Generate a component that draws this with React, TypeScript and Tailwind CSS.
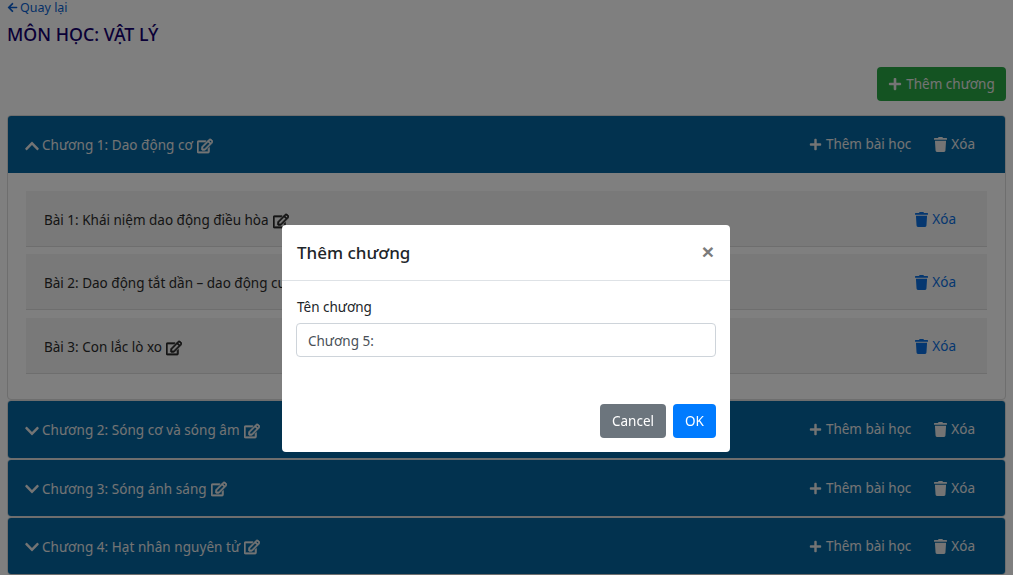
import { FaArrowLeft, FaChevronDown, FaChevronUp, FaPlus, FaRegEdit, FaTrash } from "react-icons/fa";

function ChapterHeader({ title, open, h }: { title: string; open?: boolean; h: string }) {
  return (
    <div className={`flex items-center justify-between bg-[#04659f] pl-[17px] pr-[30px] text-[#e8e8e8] ${h}`}>
      <div className="flex items-center mt-[2px]">
        {open ? <FaChevronUp className="w-[14px] h-[16px] mr-[3px]" /> : <FaChevronDown className="w-[14px] h-[16px] mr-[3px]" />}
        <span className="tracking-[0.05px]">{title}</span>
        <FaRegEdit className="w-[16px] h-[16px] ml-[4px] stroke-[24]" />
      </div>
      <div className="flex items-center">
        <FaPlus className="w-[13px] h-[13px] mr-[4px]" />
        <span>Thêm bài học</span>
        <FaTrash className="w-[13px] h-[15px] ml-[23px] mr-[4px]" />
        <span>Xóa</span>
      </div>
    </div>
  );
}

function Lesson({ title, extra }: { title: string; extra?: string }) {
  return (
    <div className={`flex items-center justify-between h-[56px] bg-[#f2f2f2] border-b border-[#dcdcdc] pl-[18px] pr-[31px] text-[#2b2b2b] ${extra ?? ""}`}>
      <div className="flex items-center mt-[4px]">
        <span>{title}</span>
        <FaRegEdit className="w-[16px] h-[16px] ml-[4px] stroke-[24]" />
      </div>
      <div className="flex items-center mt-[2px] text-[#0a6fe0]">
        <FaTrash className="w-[13px] h-[15px] mr-[4px]" />
        <span>Xóa</span>
      </div>
    </div>
  );
}

export default function App() {
  return (
    <div className="h-[575px] overflow-hidden bg-white px-[7px] text-[13.5px] leading-[21px] font-['Noto_Sans','Open_Sans',sans-serif]">
      <a className="flex items-center h-[15px] leading-[15px] text-[#0a5fd0] text-[12.5px]">
        <FaArrowLeft className="w-[11px] h-[11px] mr-[2px]" />
        Quay lại
      </a>
      <h1 className="mt-[8px] h-[22px] text-[17.8px] leading-[22px] font-medium text-[#14006e]">MÔN HỌC: VẬT LÝ</h1>
      <div className="flex justify-end mt-[22px]">
        <button className="flex items-center justify-center w-[129px] h-[34px] rounded-[4px] bg-[#28a745] text-[#e8e8e8]">
          <FaPlus className="w-[14px] h-[14px] mr-[4px]" />
          Thêm chương
        </button>
      </div>
      <div className="mt-[14px] flex flex-col">
        <div className="h-[285px] border border-[#dcdcdc] rounded-[4px] overflow-hidden">
          <ChapterHeader title="Chương 1: Dao động cơ" open h="h-[57px]" />
          <div className="flex flex-col gap-[7px] px-[18px] pt-[18px]">
            <Lesson title="Bài 1: Khái niệm dao động điều hòa" />
            <Lesson title="Bài 2: Dao động tắt dần – dao động cưỡng bức" />
            <Lesson title="Bài 3: Con lắc lò xo" extra="mt-[1px]" />
          </div>
        </div>
        <div className="border border-[#dcdcdc] rounded-[4px] overflow-hidden"><ChapterHeader title="Chương 2: Sóng cơ và sóng âm" h="h-[57px]" /></div>
        <div className="border border-[#dcdcdc] rounded-[4px] overflow-hidden"><ChapterHeader title="Chương 3: Sóng ánh sáng" h="h-[56px]" /></div>
        <div className="border border-[#dcdcdc] rounded-[4px] overflow-hidden"><ChapterHeader title="Chương 4: Hạt nhân nguyên tử" h="h-[56px]" /></div>
      </div>

      <div className="fixed inset-0 bg-black/50 flex justify-center pt-[225px] pr-px">
        <div className="w-[448px] h-[227px] bg-white rounded-[4px] flex flex-col text-[#222]">
          <div className="flex items-center justify-between h-[56px] border-b border-[#dee2e6] pl-[15px] pr-[16px]">
            <span className="text-[17px] font-medium text-[#212529]">Thêm chương</span>
            <span className="text-[21px] font-bold text-[#7b7b7b] leading-none -mt-[3px] font-['Liberation_Sans',sans-serif]">×</span>
          </div>
          <div className="px-[14px] pt-[16px] flex-1">
            <label className="block h-[21px] pl-px text-[#212529]">Tên chương</label>
            <input
              readOnly
              value="Chương 5:"
              className="block mt-[5px] w-full h-[34px] px-[11px] pt-[2px] border border-[#ced4da] rounded-[4px] text-[#495057] outline-none"
            />
          </div>
          <div className="flex justify-end gap-[7px] px-[14px] pb-[14px]">
            <button className="w-[66px] h-[34px] rounded-[4px] bg-[#6c757d] text-white">Cancel</button>
            <button className="w-[43px] h-[34px] rounded-[4px] bg-[#007bff] text-white">OK</button>
          </div>
        </div>
      </div>
    </div>
  );
}
